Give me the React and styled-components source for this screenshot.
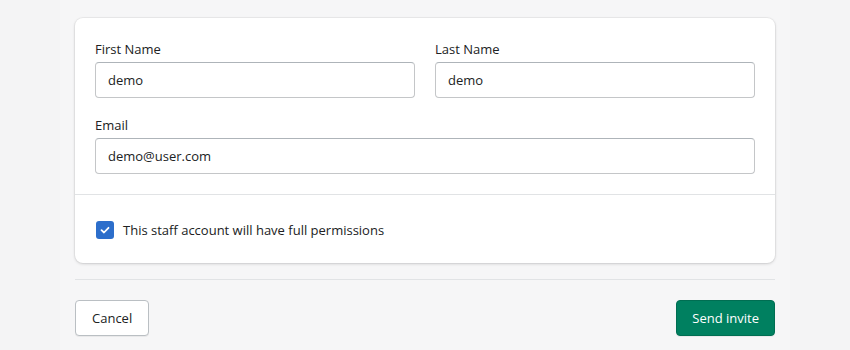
import React from "react";
import styled, { createGlobalStyle } from "styled-components";

const Global = createGlobalStyle`
  html, body { margin: 0; padding: 0; background: #f4f4f5; }
  body { font-family: "Open Sans", "Noto Sans", sans-serif; color: #202223; }
  * { box-sizing: border-box; }
`;

const Page = styled.div`
  width: 850px;
  height: 350px;
  display: flex;
  justify-content: center;
`;

const Column = styled.div`
  width: 730px;
  background: #f6f6f7;
  padding: 18px 15px 0;
`;

const Card = styled.div`
  background: #fff;
  border-radius: 8px;
  box-shadow: 0 0 0 1px rgba(63,63,68,0.05), 0 1px 3px rgba(63,63,68,0.2);
`;

const Section = styled.div`
  padding: ${p => p.$pad || "20px"};
  display: flex;
  flex-direction: column;
  gap: 17px;
`;

const Divider = styled.div`
  height: 1px;
  background: #e1e3e5;
`;

const Row = styled.div`
  display: grid;
  grid-template-columns: 1fr 1fr;
  gap: 20px;
`;

const Field = styled.label`
  display: flex;
  flex-direction: column;
  gap: 3px;
`;

const Label = styled.span`
  font-size: 13px;
  line-height: 20px;
  color: #202223;
`;

const Input = styled.input`
  height: 36px;
  width: 100%;
  border: 1px solid #c4c6c8;
  border-top-color: #aeb4b9;
  border-radius: 4px;
  padding: 0 12px;
  font: inherit;
  font-size: 13px;
  color: #202223;
  background: #fff;
  outline: none;
`;

const CheckRow = styled.label`
  display: flex;
  align-items: center;
  gap: 9px;
  font-size: 13px;
  color: #202223;
`;

const Box = styled.span`
  width: 18px;
  height: 18px;
  border-radius: 3px;
  background: #2c6ecb;
  display: flex;
  align-items: center;
  justify-content: center;
  margin-left: 1px;
`;

const Footer = styled.div`
  margin-top: 16px;
  border-top: 1px solid #e1e3e5;
  padding-top: 20px;
  display: flex;
  justify-content: space-between;
`;

const Button = styled.button`
  height: 36px;
  padding: 0 ${p => (p.$primary ? "15px" : "16px")};
  border-radius: 4px;
  font: inherit;
  font-size: 13px;
  cursor: pointer;
  border: 1px solid ${p => (p.$primary ? "#006e52" : "#babfc3")};
  background: ${p => (p.$primary ? "#008060" : "#fff")};
  color: ${p => (p.$primary ? "#fff" : "#202223")};
  box-shadow: 0 1px 0 rgba(0,0,0,0.05);
`;

export default function App() {
  return (
    <>
      <Global />
      <Page>
        <Column>
          <Card>
            <Section $pad="21px 20px 20px">
              <Row>
                <Field>
                  <Label>First Name</Label>
                  <Input defaultValue="demo" />
                </Field>
                <Field>
                  <Label>Last Name</Label>
                  <Input defaultValue="demo" />
                </Field>
              </Row>
              <Field>
                <Label>Email</Label>
                <Input defaultValue="demo@user.com" />
              </Field>
            </Section>
            <Divider />
            <Section $pad="26px 20px 24px">
              <CheckRow>
                <Box>
                  <svg width="12" height="12" viewBox="0 0 12 12">
                    <path d="M2.5 6.2 L5 8.5 L9.5 3.8" fill="none" stroke="#fff" strokeWidth="1.8" strokeLinecap="round" strokeLinejoin="round" />
                  </svg>
                </Box>
                This staff account will have full permissions
              </CheckRow>
            </Section>
          </Card>
          <Footer>
            <Button>Cancel</Button>
            <Button $primary>Send invite</Button>
          </Footer>
        </Column>
      </Page>
    </>
  );
}
